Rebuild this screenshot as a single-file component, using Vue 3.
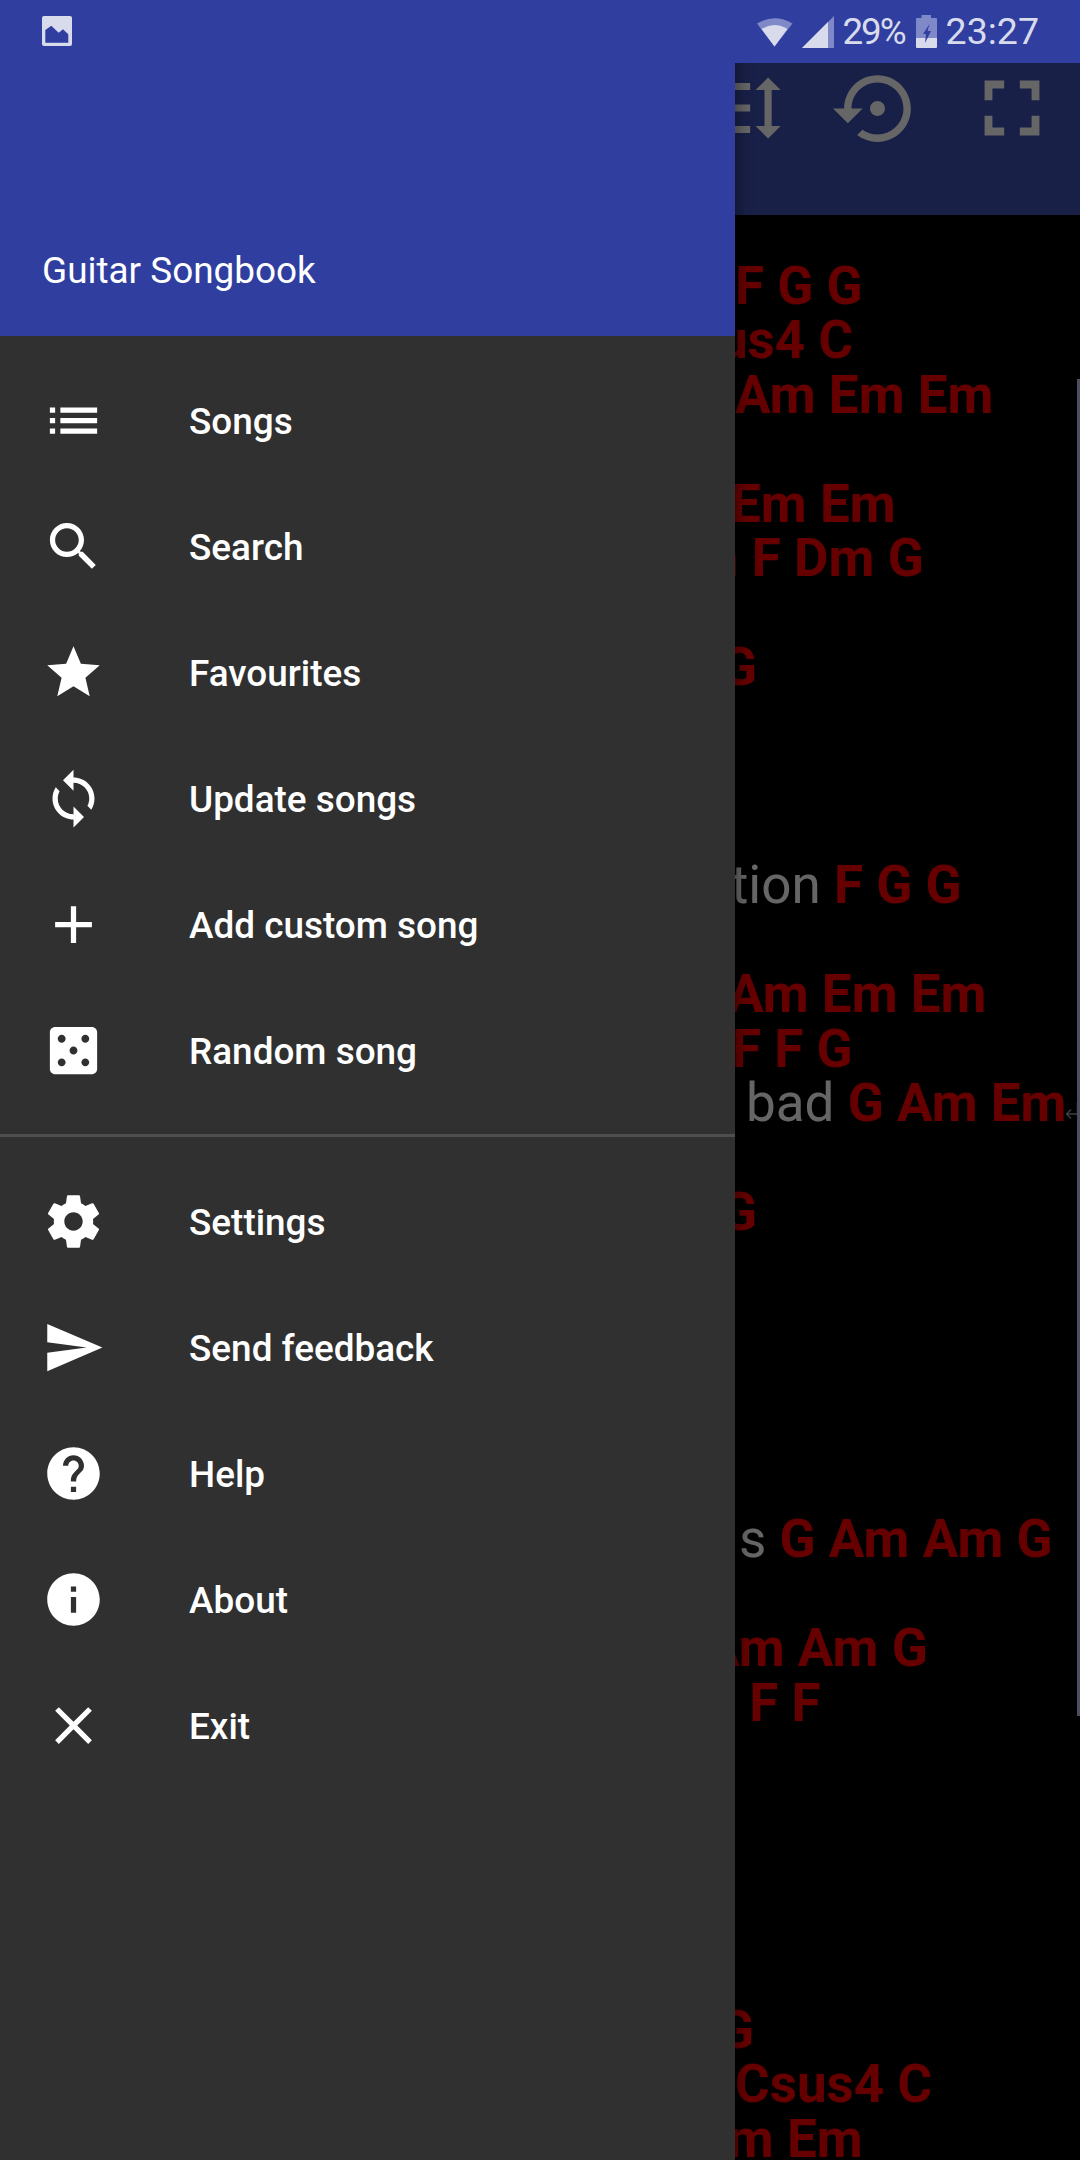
<script setup>
const lines = [
  { x: 735, parts: [['c', 'F G G']] },
  { x: 656, parts: [['c', 'Csus4 C']] },
  { x: 735, parts: [['c', 'Am Em Em']] },
  { x: 0, parts: [] },
  { x: 731, parts: [['c', 'Em Em']] },
  { x: 658, parts: [['c', 'Am F Dm G']] },
  { x: 0, parts: [] },
  { x: 721, parts: [['c', 'G']] },
  { x: 0, parts: [] },
  { x: 0, parts: [] },
  { x: 0, parts: [] },
  { x: 731, parts: [['l', 'tion '], ['c', 'F G G']] },
  { x: 0, parts: [] },
  { x: 728, parts: [['c', 'Am Em Em']] },
  { x: 732, parts: [['c', 'F F G']] },
  { x: 746, parts: [['l', 'bad '], ['c', 'G Am Em']], wrapped: true },
  { x: 0, parts: [] },
  { x: 721, parts: [['c', 'G']] },
  { x: 0, parts: [] },
  { x: 0, parts: [] },
  { x: 0, parts: [] },
  { x: 0, parts: [] },
  { x: 0, parts: [] },
  { x: 739, parts: [['l', 's '], ['c', 'G Am Am G']] },
  { x: 0, parts: [] },
  { x: 704, parts: [['c', 'Am Am G']] },
  { x: 707, parts: [['c', 'F F F']] },
  { x: 0, parts: [] },
  { x: 0, parts: [] },
  { x: 0, parts: [] },
  { x: 0, parts: [] },
  { x: 0, parts: [] },
  { x: 718, parts: [['c', 'G']] },
  { x: 735, parts: [['c', 'Csus4 C']] },
  { x: 698, parts: [['c', 'Em Em']] },
]

const primary = [
  { label: 'Songs', d: 'M3 13h2v-2H3v2zm0 4h2v-2H3v2zm0-8h2V7H3v2zm4 4h14v-2H7v2zm0 4h14v-2H7v2zM7 7v2h14V7H7z' },
  { label: 'Search', d: 'M15.5 14h-.79l-.28-.27C15.41 12.59 16 11.11 16 9.5 16 5.91 13.09 3 9.5 3S3 5.91 3 9.5 5.91 16 9.5 16c1.61 0 3.09-.59 4.23-1.57l.27.28v.79l5 4.99L20.49 19l-4.99-5zm-6 0C7.01 14 5 11.99 5 9.5S7.01 5 9.5 5 14 7.01 14 9.5 11.99 14 9.5 14z' },
  { label: 'Favourites', d: 'M12 17.27L18.18 21l-1.64-7.03L22 9.24l-7.19-.61L12 2 9.19 8.63 2 9.24l5.46 4.73L5.82 21z' },
  { label: 'Update songs', d: 'M12 4V1L8 5l4 4V6c3.31 0 6 2.69 6 6 0 1.01-.25 1.97-.7 2.8l1.46 1.46C19.54 15.03 20 13.57 20 12c0-4.42-3.58-8-8-8zm0 14c-3.31 0-6-2.69-6-6 0-1.01.25-1.97.7-2.8L5.24 7.74C4.46 8.97 4 10.43 4 12c0 4.42 3.58 8 8 8v3l4-4-4-4v3z' },
  { label: 'Add custom song', d: 'M19 13h-6v6h-2v-6H5v-2h6V5h2v6h6v2z' },
  { label: 'Random song', d: 'M19 3H5c-1.1 0-2 .9-2 2v14c0 1.1.9 2 2 2h14c1.1 0 2-.9 2-2V5c0-1.1-.9-2-2-2zM7.5 18c-.83 0-1.5-.67-1.5-1.5S6.67 15 7.5 15s1.5.67 1.5 1.5S8.33 18 7.5 18zm0-9C6.67 9 6 8.33 6 7.5S6.67 6 7.5 6 9 6.67 9 7.5 8.33 9 7.5 9zm4.5 4.5c-.83 0-1.5-.67-1.5-1.5s.67-1.5 1.5-1.5 1.5.67 1.5 1.5-.67 1.5-1.5 1.5zm4.5 4.5c-.83 0-1.5-.67-1.5-1.5s.67-1.5 1.5-1.5 1.5.67 1.5 1.5-.67 1.5-1.5 1.5zm0-9c-.83 0-1.5-.67-1.5-1.5S15.67 6 16.5 6s1.5.67 1.5 1.5S17.33 9 16.5 9z' },
]
const secondary = [
  { label: 'Settings', d: 'M19.43 12.98c.04-.32.07-.64.07-.98s-.03-.66-.07-.98l2.11-1.65c.19-.15.24-.42.12-.64l-2-3.46c-.12-.22-.39-.3-.61-.22l-2.49 1c-.52-.4-1.08-.73-1.69-.98l-.38-2.65C14.46 2.18 14.25 2 14 2h-4c-.25 0-.46.18-.49.42l-.38 2.65c-.61.25-1.17.59-1.69.98l-2.49-1c-.23-.09-.49 0-.61.22l-2 3.46c-.13.22-.07.49.12.64l2.11 1.65c-.04.32-.07.65-.07.98s.03.66.07.98l-2.11 1.65c-.19.15-.24.42-.12.64l2 3.46c.12.22.39.3.61.22l2.49-1c.52.4 1.08.73 1.69.98l.38 2.65c.03.24.24.42.49.42h4c.25 0 .46-.18.49-.42l.38-2.65c.61-.25 1.17-.59 1.69-.98l2.49 1c.23.09.49 0 .61-.22l2-3.46c.12-.22.07-.49-.12-.64l-2.11-1.65zM12 15.5c-1.93 0-3.5-1.57-3.5-3.5s1.57-3.5 3.5-3.5 3.5 1.57 3.5 3.5-1.57 3.5-3.5 3.5z' },
  { label: 'Send feedback', d: 'M2.01 21L23 12 2.01 3 2 10l15 2-15 2z' },
  { label: 'Help', d: 'M12 2C6.48 2 2 6.48 2 12s4.48 10 10 10 10-4.48 10-10S17.52 2 12 2zm1 17h-2v-2h2v2zm2.07-7.75l-.9.92C13.45 12.9 13 13.5 13 15h-2v-.5c0-1.1.45-2.1 1.17-2.83l1.24-1.26c.37-.36.59-.86.59-1.41 0-1.1-.9-2-2-2s-2 .9-2 2H8c0-2.21 1.79-4 4-4s4 1.79 4 4c0 .88-.36 1.68-.93 2.25z' },
  { label: 'About', d: 'M12 2C6.48 2 2 6.48 2 12s4.48 10 10 10 10-4.48 10-10S17.52 2 12 2zm1 15h-2v-6h2v6zm0-8h-2V7h2v2z' },
  { label: 'Exit', d: 'M19 6.41L17.59 5 12 10.59 6.41 5 5 6.41 10.59 12 5 17.59 6.41 19 12 13.41 17.59 19 19 17.59 13.41 12z' },
]
</script>

<template>
  <div class="screen">
    <main class="page">
      <div class="toolbar">
        <svg class="tool tool-spacing" viewBox="0 0 24 24"><path transform="matrix(-1 0 0 1 24 0)" d="M6 7h2.5L5 3.5 1.5 7H4v10H1.5L5 20.5 8.5 17H6V7zm4-2v2h12V5H10zm0 14h12v-2H10v2zm0-6h12v-2H10v2z" /></svg>
        <svg class="tool tool-restore" viewBox="0 0 24 24"><path d="M14 12c0-1.1-.9-2-2-2s-2 .9-2 2 .9 2 2 2 2-.9 2-2zm-2-9c-4.97 0-9 4.03-9 9H0l4 4 4-4H5c0-3.87 3.13-7 7-7s7 3.13 7 7-3.13 7-7 7c-1.51 0-2.91-.49-4.06-1.3l-1.42 1.44C8.04 20.3 9.94 21 12 21c4.97 0 9-4.03 9-9s-4.03-9-9-9z" /></svg>
        <svg class="tool tool-full" viewBox="0 0 24 24"><path d="M7 14H5v5h5v-2H7v-3zm-2-4h2V7h3V5H5v5zm12 7h-3v2h5v-5h-2v3zM14 5v2h3v3h2V5h-5z" /></svg>
      </div>
      <div class="song">
        <div v-for="(line, i) in lines" :key="i" class="line" :style="{ marginLeft: line.x + 'px' }">
          <span v-for="(p, j) in line.parts" :key="j" :class="p[0] === 'c' ? 'chord' : 'lyric'">{{ p[1] }}</span>
          <svg v-if="line.wrapped" class="wrap" width="14" height="20" viewBox="0 0 14 20">
            <path d="M12.500 1V13H1.500M6 8.500L1.500 13 6 17.500" fill="none" stroke="#999" stroke-width="1.500" />
          </svg>
        </div>
      </div>
      <div class="scrollbar"></div>
    </main>
    <div class="scrim"></div>

    <nav class="drawer">
      <header class="drawer-head">Guitar Songbook</header>
      <ul class="menu">
        <li v-for="item in primary" :key="item.label" class="item">
          <svg class="icon" viewBox="0 0 24 24"><path :d="item.d" /></svg>
          <span class="label">{{ item.label }}</span>
        </li>
      </ul>
      <div class="divider"></div>
      <ul class="menu">
        <li v-for="item in secondary" :key="item.label" class="item">
          <svg class="icon" viewBox="0 0 24 24"><path :d="item.d" /></svg>
          <span class="label">{{ item.label }}</span>
        </li>
      </ul>
    </nav>

    <div class="status">
      <svg class="st-image" width="30" height="30" viewBox="0 0 30 30">
        <rect x="0" y="0" width="30" height="30" rx="2" fill="#d8dbec" />
        <path d="M3.3 14L9.3 9.7 16.7 16.7 21 13.3 26.3 18.3V26.700H3.3z" fill="#303f9f" />
      </svg>
      <div class="st-right">
        <svg class="st-wifi" width="36" height="32" viewBox="0 0 36 32">
          <path d="M0 7.5Q17.5 -3 35.5 7.5L17.5 30.5z" fill="#8089c8" />
          <path d="M4.5 13Q17.5 5 30.5 13L17.5 30.5z" fill="#d8dbec" />
        </svg>
        <svg class="st-signal" width="32" height="32" viewBox="0 0 32 32">
          <path d="M0 32L32 0V32z" fill="#8089c8" />
          <path d="M0 32L26 6V32z" fill="#d8dbec" />
        </svg>
        <span class="st-pct">29%</span>
        <svg class="st-batt" width="21" height="33" viewBox="0 0 21 33">
          <path d="M5.5 0H15V3H20a1 1 0 0 1 1 1V23H0V4a1 1 0 0 1 1-1H5.500z" fill="#8089c8" />
          <path d="M0 23H21V32a1 1 0 0 1-1 1H1a1 1 0 0 1-1-1z" fill="#d8dbec" />
          <path d="M13.500 9L7 19H10L9 28 15 16H11.500z" fill="#303f9f" />
        </svg>
        <span class="st-time">23:27</span>
      </div>
    </div>
  </div>
</template>

<style>
html, body { margin: 0; background: #000; }
</style>

<style scoped>
.screen {
  position: relative;
  width: 1080px;
  height: 2160px;
  overflow: hidden;
  background: #000;
  font-family: Roboto, "Liberation Sans", sans-serif;
}
.page {
  display: flex;
  flex-direction: column;
  height: 100%;
  padding-top: 63px;
  box-sizing: border-box;
}
.toolbar {
  display: flex;
  align-items: center;
  flex: none;
  height: 152px;
  padding-bottom: 62px;
  box-sizing: border-box;
  background: #3f51b5;
}
.tool { flex: none; fill: #fff; }
.tool-spacing { width: 86px; height: 86px; margin-left: 700px; }
.tool-restore { width: 89px; height: 89px; margin-left: 47px; }
.tool-full { width: 94px; height: 94px; margin-left: 43px; }
.song {
  padding-top: 43.6px;
  font-size: 53px;
}
.line {
  height: 54.5px;
  line-height: 54.5px;
  white-space: nowrap;
}
.chord { color: #f00; font-weight: 700; }
.lyric { color: #fff; font-weight: 400; }
.wrap { margin-left: -2px; }
.scrollbar {
  position: absolute;
  top: 379px;
  right: 0;
  width: 3px;
  height: 1337px;
  background: #bcc6e8;
}
.scrim {
  position: absolute;
  inset: 0;
  background: rgba(0, 0, 0, 0.6);
}
.drawer {
  position: absolute;
  top: 0;
  left: 0;
  bottom: 0;
  width: 735px;
  background: #303030;
  box-shadow: 4px 0 12px rgba(0, 0, 0, 0.35);
}
.drawer-head {
  display: flex;
  align-items: flex-end;
  height: 336px;
  padding: 0 0 44px 42px;
  box-sizing: border-box;
  background: #303f9f;
  color: #fff;
  font-size: 36.9px;
  line-height: 43px;
}
.menu {
  list-style: none;
  margin: 0;
  padding: 21px 0;
}
.item {
  display: flex;
  align-items: center;
  height: 126px;
  padding-left: 42px;
  color: #fff;
  font-size: 36.9px;
  font-weight: 500;
}
.label { padding-top: 2px; }
.icon {
  width: 63px;
  height: 63px;
  margin-right: 84px;
  fill: #fff;
  flex: none;
}
.divider {
  height: 3px;
  background: #4e4e4e;
}
.status {
  position: absolute;
  top: 0;
  left: 0;
  right: 0;
  display: flex;
  align-items: center;
  justify-content: space-between;
  height: 63px;
  padding: 0 41px 0 42px;
  box-sizing: border-box;
  background: #303f9f;
  color: #d8dbec;
  font-size: 36.75px;
  line-height: 63px;
}
.st-image { margin-bottom: 2px; }
.st-right { display: flex; align-items: center; height: 100%; }
.st-signal { margin-left: 9px; }
.st-pct { margin-left: 8px; letter-spacing: -2px; }
.st-batt { margin-left: 11px; }
.st-time { margin-left: 9px; font-size: 37.5px; }
</style>
